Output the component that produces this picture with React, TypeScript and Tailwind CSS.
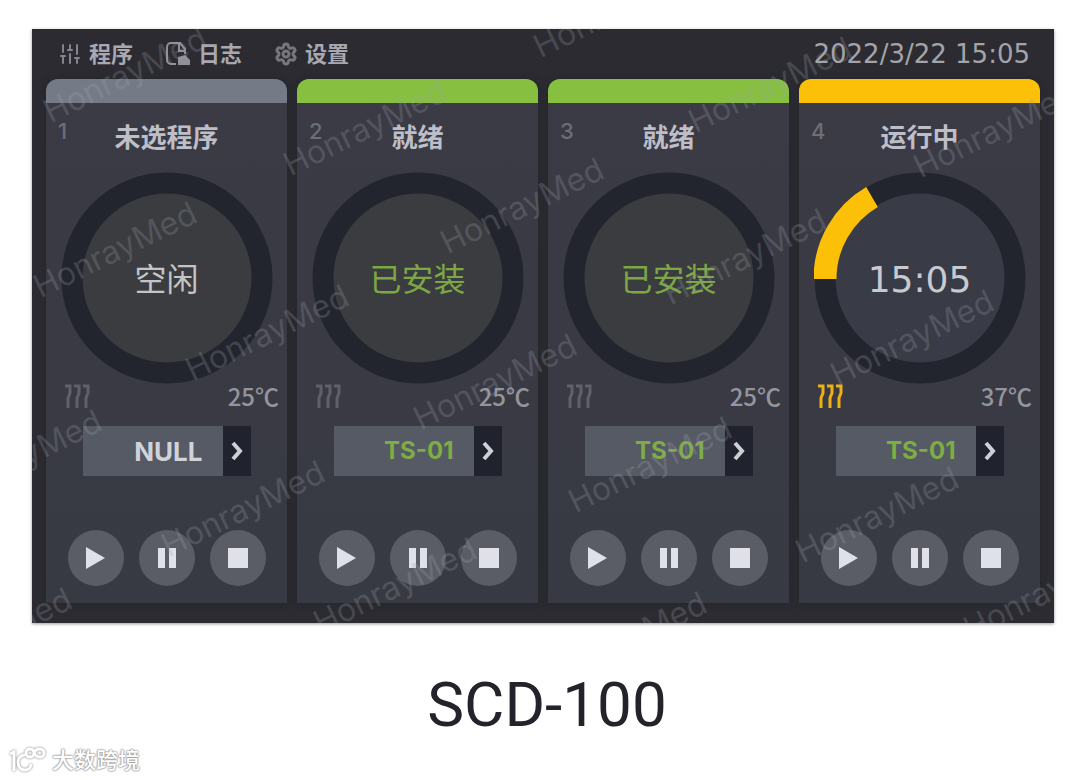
import React, { useState } from 'react';
import { Settings, SlidersVertical } from 'lucide-react';

type Status = 'idle' | 'ready' | 'running';

interface Channel {
  id: number;
  status: Status;
  title: string;
  label: string;
  temperature: string;
  program: string;
}

const CHANNELS: Channel[] = [
  { id: 1, status: 'idle', title: '未选程序', label: '空闲', temperature: '25℃', program: 'NULL' },
  { id: 2, status: 'ready', title: '就绪', label: '已安装', temperature: '25℃', program: 'TS-01' },
  { id: 3, status: 'ready', title: '就绪', label: '已安装', temperature: '25℃', program: 'TS-01' },
  { id: 4, status: 'running', title: '运行中', label: '15:05', temperature: '37℃', program: 'TS-01' },
];

const BAR_COLORS: Record<Status, string> = {
  idle: 'bg-[#747b86]',
  ready: 'bg-[#87bf41]',
  running: 'bg-[#fdc009]',
};

const LABEL_COLORS: Record<Status, string> = {
  idle: 'text-[32px] text-[#c2c4c7]',
  ready: 'text-[32px] text-[#7da744]',
  running: "font-['DejaVu_Sans',sans-serif] text-[36px] text-[#c9cad0]",
};

// centres of the repeated watermark, relative to the screen
const WATERMARKS = [
  { x: 93, y: 46 },
  { x: 583, y: -19 },
  { x: 738, y: 56 },
  { x: 333, y: 99 },
  { x: 963, y: 101 },
  { x: 83, y: 221 },
  { x: 490, y: 177 },
  { x: 713, y: 228 },
  { x: 235, y: 304 },
  { x: 880, y: 309 },
  { x: 463, y: 353 },
  { x: -12, y: 429 },
  { x: 618, y: 436 },
  { x: 211, y: 480 },
  { x: 845, y: 486 },
  { x: 363, y: 557 },
  { x: 593, y: 611 },
  { x: 1013, y: 563 },
  { x: -42, y: 607 },
];

export default function App() {
  return (
    <main className="min-h-screen bg-white font-['Inter','Noto_Sans_CJK_SC',sans-serif]">
      <div className="pt-[29px] pl-8 pr-[26px]">
        <section className="relative overflow-hidden bg-[#2b2b31] pb-5 shadow-[0_1px_3px_rgba(0,0,0,0.4)]">
          <header className="flex h-[50px] items-center justify-between pl-[26px] pr-6 text-[#a9a8b0]">
            <nav className="flex items-center gap-8">
              <NavButton label="程序" icon={<SlidersVertical className="h-6 w-6 text-[#85848e]" strokeWidth={2} />} />
              <NavButton label="日志" icon={<LogIcon />} />
              <NavButton label="设置" icon={<Settings className="h-6 w-6 text-[#77767c]" strokeWidth={3} />} />
            </nav>
            <time
              dateTime="2022-03-22T15:05"
              className="font-['DejaVu_Sans',sans-serif] text-[26px] leading-8 text-[#a3a3a8]"
            >
              2022/3/22 15:05
            </time>
          </header>

          <div className="grid grid-cols-4 gap-[10px] px-[14px]">
            {CHANNELS.map((channel) => (
              <ChannelPanel key={channel.id} channel={channel} />
            ))}
          </div>

          <div className="pointer-events-none absolute inset-0" aria-hidden="true">
            {WATERMARKS.map((mark) => (
              <span
                key={`${mark.x}-${mark.y}`}
                className="absolute -translate-x-1/2 -translate-y-1/2 -rotate-[26deg] text-[32px] leading-10 text-[#9fa3ad]/25"
                style={{ left: mark.x, top: mark.y }}
              >
                HonrayMed
              </span>
            ))}
          </div>
        </section>
      </div>

      <h1 className="mt-12 pl-[14px] text-center font-['Roboto',sans-serif] text-[62px] leading-[68px] text-[#25222b]">
        SCD-100
      </h1>

      <footer className="flex items-center gap-1 pl-2 pt-[7px]">
        <BrandLogo />
        <span className="text-[22px] font-medium leading-7 text-white [text-shadow:0_0_2px_#888,0_0_2px_#999,0_0_1px_#999]">
          大数跨境
        </span>
      </footer>
    </main>
  );
}

function NavButton({ label, icon }: { label: string; icon: React.ReactNode }) {
  return (
    <button type="button" className="flex items-center gap-[7px] text-[22px] font-bold leading-8">
      {icon}
      {label}
    </button>
  );
}

function ChannelPanel({ channel }: { channel: Channel }) {
  const [program, setProgram] = useState(channel.program);
  const selectId = `program-${channel.id}`;

  return (
    <article className="rounded-t-xl bg-gradient-to-b from-[#3b3a45] to-[#383a43] pb-[17px] shadow-[0_0_6px_#24252d]">
      <div className={`h-6 rounded-t-xl ${BAR_COLORS[channel.status]}`} />

      <div className="relative flex h-[69px] items-center justify-center">
        <span className="absolute left-3 top-3 text-[22px] font-medium leading-8 text-[#6c6e78]">{channel.id}</span>
        <h2 className="text-[26px] font-bold leading-8 text-[#bebec8]">{channel.title}</h2>
      </div>

      <ProgressRing channel={channel} />

      <div className="flex h-[42px] items-start justify-between pl-[18px] pr-2">
        <HeatIcon active={channel.status === 'running'} />
        <span className="font-['Noto_Sans_CJK_SC',sans-serif] text-[24px] font-medium leading-6 text-[#94949c]">
          {channel.temperature}
        </span>
      </div>

      <div className="relative mx-auto h-[50px] w-[168px]">
        <label htmlFor={selectId} className="sr-only">程序 {channel.id}</label>
        <select
          id={selectId}
          value={program}
          onChange={(e) => setProgram(e.target.value)}
          className={`h-full w-full appearance-none bg-[#565a64] pr-12 font-bold [text-align-last:right] ${
            program === 'NULL' ? 'text-[26px] text-[#d0d3da]' : 'text-[24px] text-[#7eac45]'
          }`}
        >
          <option value="NULL">NULL</option>
          <option value="TS-01">TS-01</option>
        </select>
        <span className="pointer-events-none absolute inset-y-0 right-0 flex w-7 items-center justify-center bg-[#20222d] text-[#ced0d6]">
          <svg viewBox="0 0 28 28" className="h-7 w-7" fill="none" stroke="currentColor" strokeWidth="4" aria-hidden="true">
            <path d="M10 6l7 8-7 8" />
          </svg>
        </span>
      </div>

      <div className="mt-[54px] flex justify-center gap-[15px]">
        <ControlButton label="启动">
          <path d="M18 17v22l19-11z" />
        </ControlButton>
        <ControlButton label="暂停">
          <path d="M19 18h7v20h-7zM30 18h7v20h-7z" />
        </ControlButton>
        <ControlButton label="停止">
          <path d="M18 18h20v20H18z" />
        </ControlButton>
      </div>
    </article>
  );
}

function ProgressRing({ channel }: { channel: Channel }) {
  return (
    <div className="grid place-items-center">
      <svg viewBox="0 0 212 212" className="h-[212px] w-[212px] [grid-area:1/1]" aria-hidden="true">
        <circle cx="106" cy="106" r="95" fill={channel.status === 'running' ? '#393b46' : '#3a3c40'} stroke="#22252d" strokeWidth="21" />
        {channel.status === 'running' && (
          <path d="M11 107A95 95 0 0 1 58 25" fill="none" stroke="#fdc009" strokeWidth="23" />
        )}
      </svg>
      <span className={`pt-1 leading-10 [grid-area:1/1] ${LABEL_COLORS[channel.status]}`}>{channel.label}</span>
    </div>
  );
}

function ControlButton({ label, children }: { label: string; children: React.ReactNode }) {
  return (
    <button type="button" aria-label={label} className="h-14 w-14 rounded-full bg-[#5b5d66]">
      <svg viewBox="0 0 56 56" className="h-14 w-14" fill="#e0e1e8">
        {children}
      </svg>
    </button>
  );
}

function HeatIcon({ active }: { active: boolean }) {
  return (
    <svg
      viewBox="0 0 26 26"
      className={`h-[26px] w-[26px] ${active ? 'text-[#eeb015]' : 'text-[#5f606b]'}`}
      fill="none"
      stroke="currentColor"
      strokeWidth="3"
      aria-hidden="true"
    >
      <path d="M1 2h5v7L4 14v10M10 2h5v7l-2 5v10M19 2h5v7l-2 5v10" />
    </svg>
  );
}

function LogIcon() {
  return (
    <svg viewBox="0 0 26 26" className="h-[26px] w-[26px] text-[#918f99]" fill="none" stroke="currentColor" strokeWidth="2" aria-hidden="true">
      <path d="M11 23H6a4 4 0 0 1-4-4V6a4 4 0 0 1 4-4h9l5 6v5" />
      <path d="M14 3v7h6" />
      <path d="M13 16l7-2 5 5v5H13z" fill="currentColor" stroke="none" />
    </svg>
  );
}

function BrandLogo() {
  return (
    <svg viewBox="0 0 40 28" className="h-7 w-10 drop-shadow-[0_0_1px_#777]" fill="none" stroke="#fff" strokeWidth="3" aria-hidden="true">
      <path d="M2 8l4-2v19" />
      <path d="M17 9c-4 0-7 3-7 7 0 5 3 8 7 8s6-3 6-6" />
      <circle cx="22" cy="7" r="4" />
      <path d="M26 7c1-3 3-4 6-4a4 4 0 0 1 0 8c-3 0-5-2-6-4" />
    </svg>
  );
}
